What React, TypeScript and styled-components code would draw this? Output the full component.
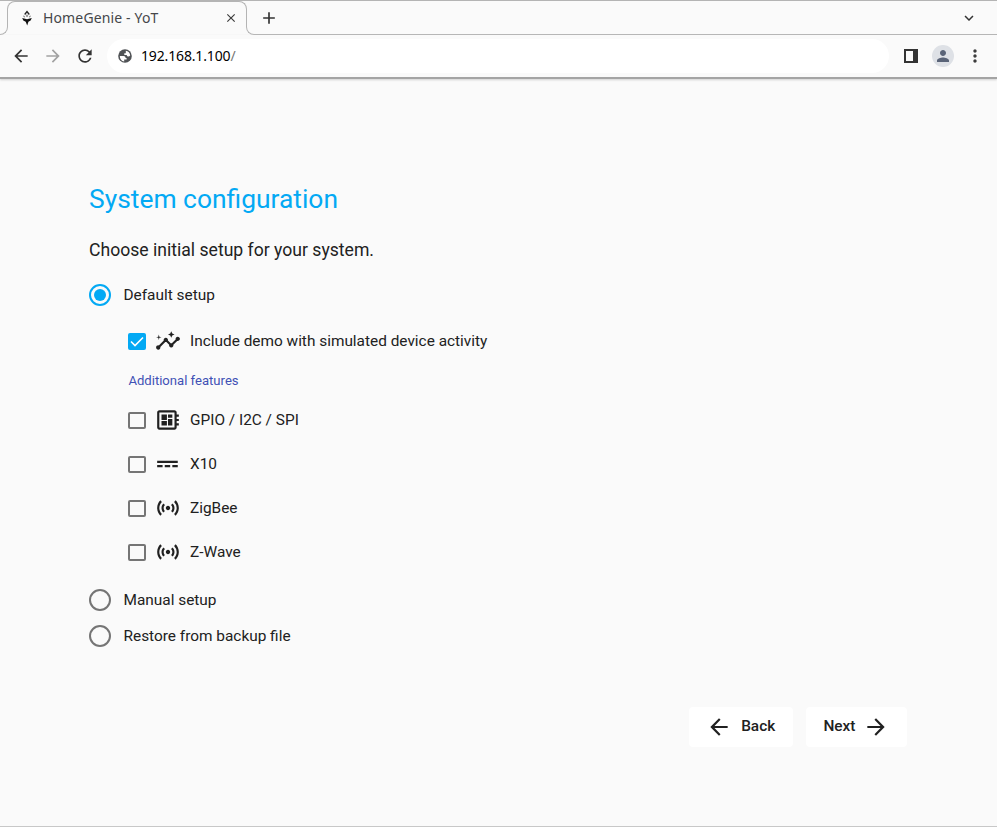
import React, { useState } from 'react';
import styled, { createGlobalStyle } from 'styled-components';
import {
  MdArrowBack,
  MdArrowForward,
  MdClose,
  MdAdd,
  MdDeveloperBoard,
  MdExpandMore,
  MdInsights,
  MdMoreVert,
  MdPerson,
  MdPowerInput,
  MdRefresh,
  MdSensors,
} from 'react-icons/md';
import type { IconType } from 'react-icons';

const GlobalStyle = createGlobalStyle`
  * { box-sizing: border-box; }
  body { margin: 0; background: #fafafa; color: #212121; font-family: Roboto, sans-serif; }
`;

const Window = styled.div`
  display: flex;
  flex-direction: column;
  height: 827px;
  overflow: hidden;
  border-bottom: 1px solid #c8c8c8;
`;

const TabStrip = styled.div`
  display: flex;
  height: 35px;
  border-top: 1px solid #b4b4b4;
`;

const Flare = styled.div<{ $side: 'left' | 'right' }>`
  align-self: flex-end;
  width: 8px;
  height: 8px;
  border-bottom: 1px solid #b4b4b4;
  ${({ $side }) =>
    $side === 'left'
      ? 'border-right: 1px solid #b4b4b4; border-bottom-right-radius: 8px; margin-right: -1px;'
      : 'border-left: 1px solid #b4b4b4; border-bottom-left-radius: 8px; margin-left: -1px;'}
`;

const Tab = styled.div`
  display: flex;
  align-items: center;
  width: 240px;
  height: 26px;
  padding: 7px 8px 0 11px;
  border: 1px solid #b4b4b4;
  border-bottom: none;
  border-radius: 8px 8px 0 0;
`;

const TabTitle = styled.span`
  flex: 1;
  margin-left: 8px;
  font: 14px/20px 'Noto Sans', sans-serif;
  letter-spacing: 0.14px;
  color: #45474a;
  white-space: nowrap;
`;

const StripRest = styled.div`
  display: flex;
  flex: 1;
  align-items: center;
  justify-content: space-between;
  padding: 1px 19px 0 5px;
  border-bottom: 1px solid #b4b4b4;
  color: #333333;
`;

const Toolbar = styled.div`
  display: flex;
  align-items: center;
  height: 44px;
  padding: 0 12px 1px 11px;
  border-bottom: 2px solid #a4a4a4;
  box-shadow: 0 1px 2px #d0d0d0;
  color: #3c3c3c;
`;

const NavButton = styled.button<{ $dim?: boolean }>`
  display: flex;
  width: 20px;
  height: 20px;
  margin-right: 12px;
  padding: 0;
  border: 0;
  background: none;
  color: ${({ $dim }) => ($dim ? '#a2a2a2' : '#333333')};
`;

const AddressBar = styled.div`
  display: flex;
  flex: 1;
  align-items: center;
  height: 34px;
  margin-right: 15px;
  padding-left: 10px;
  border-radius: 17px;
  background: #ffffff;
  color: #505356;
`;

const Address = styled.span`
  margin-left: 8px;
  font: 14px/20px 'Noto Sans', sans-serif;
  letter-spacing: -0.15px;
  color: #000000;

  i { font-style: normal; color: #777777; }
`;

const Tools = styled.div`
  display: flex;
  align-items: center;
  gap: 11px;

  > :first-child { margin-right: 3px; }
`;

const Avatar = styled.div`
  display: flex;
  align-items: center;
  justify-content: center;
  width: 22px;
  height: 22px;
  border-radius: 50%;
  background: #dee1e6;
  color: #5a6478;
`;

const Page = styled.main`
  display: flex;
  flex: 1;
  flex-direction: column;
  padding: 103px 90px 0 89px;
`;

const Title = styled.h1`
  margin: 0;
  font-size: 26.4px;
  line-height: 34px;
  font-weight: 400;
  color: #03a9f4;
`;

const Intro = styled.p`
  margin: 22px 0 15px;
  font-size: 17.6px;
  line-height: 24px;
`;

const RadioRow = styled.label`
  display: flex;
  align-items: center;
  height: 36px;
  font-size: 15.4px;
`;

const RadioMark = styled.span<{ $on: boolean }>`
  display: flex;
  align-items: center;
  justify-content: center;
  width: 22px;
  height: 22px;
  margin-right: 12.5px;
  border: 2px solid ${({ $on }) => ($on ? '#03a9f4' : '#757575')};
  border-radius: 50%;

  &::after {
    content: '';
    width: 12px;
    height: 12px;
    border-radius: 50%;
    background: ${({ $on }) => ($on ? '#03a9f4' : 'transparent')};
  }
`;

const Features = styled.div`
  display: flex;
  flex-direction: column;
  margin: 6px 0 8px 39px;
`;

const FeatureRow = styled.label`
  display: flex;
  align-items: center;
  height: 44px;
  font-size: 15.4px;

  > svg { margin: 0 9px 1px; }
`;

const CheckMark = styled.span<{ $on: boolean }>`
  display: flex;
  align-items: center;
  justify-content: center;
  width: 18px;
  height: 17px;
  margin-top: 1px;
  border: 2px solid ${({ $on }) => ($on ? '#03a9f4' : '#757575')};
  border-radius: 2px;
  background: ${({ $on }) => ($on ? '#03a9f4' : 'transparent')};
`;

const Subheading = styled.div`
  height: 35px;
  padding: 8px 0 0 0.4px;
  font-size: 13.1px;
  line-height: 20px;
  color: #3f51b5;
`;

const Actions = styled.div`
  display: flex;
  justify-content: flex-end;
  gap: 13px;
  margin-top: 53px;
`;

const ActionButton = styled.button<{ $width: number }>`
  display: flex;
  align-items: center;
  justify-content: space-between;
  width: ${({ $width }) => $width}px;
  height: 40px;
  padding: 0 17.8px 2px 17.4px;
  border: 0;
  border-radius: 4px;
  background: #ffffff;
  color: #212121;
  font: 500 15.4px/20px Roboto, sans-serif;

  > svg { margin-top: 2px; }
`;

const TabIcon = () => (
  <svg width="16" height="16" viewBox="0 0 16 16">
    <path d="M8 .5 10.8 4 9.8 5 8 2.8 6.2 5 5.2 4z" fill="#222" />
    <path d="M4.2 5.4 5.6 6 6 7.4 4.6 7zM11.8 5.4 10.4 6 10 7.4 11.4 7z" fill="#777" />
    <circle cx="8" cy="5.8" r="1.2" fill="#999" />
    <path d="M3.2 8 8 9.2 12.8 8 11.6 10.5 9.4 11.7 8.2 15.5 6.7 11.7 4.3 10.5z" fill="#111" />
  </svg>
);

const GlobeIcon = () => (
  <svg width="16" height="16" viewBox="0 0 16 16">
    <circle cx="8" cy="8" r="6.8" fill="#505356" />
    <path
      d="M2.8 8h3.6c1.5 0 2.2.8 2.2 2h1v1.5H7.2v1.9C4.6 13.2 2.7 11 2.8 8z"
      fill="#fff"
    />
    <path
      d="M8.8 2.8c2.4.3 4.3 2.3 4.4 4.8-.6.8-1.4 1-2.3.9-.8-.1-1.1-.6-1.1-1.4H7.3V5.3h1.5z"
      fill="#fff"
    />
  </svg>
);

const SidePanelIcon = () => (
  <svg width="14" height="14" viewBox="0 0 14 14">
    <path fillRule="evenodd" d="M0 0h14v14H0zM2 2v10h7V2z" fill="#333" />
  </svg>
);

const Tick = () => (
  <svg width="14" height="13" viewBox="0 0 14 13">
    <path d="M1 6.5 5 10.5 13 2.5" fill="none" stroke="#fff" strokeWidth="1.6" />
  </svg>
);

const features: { name: string; icon: IconType }[] = [
  { name: 'GPIO / I2C / SPI', icon: MdDeveloperBoard },
  { name: 'X10', icon: MdPowerInput },
  { name: 'ZigBee', icon: MdSensors },
  { name: 'Z-Wave', icon: MdSensors },
];

type FeatureProps = { name: string; icon: IconType; on: boolean; onToggle: () => void };

const Feature = ({ name, icon: Icon, on, onToggle }: FeatureProps) => (
  <FeatureRow onClick={onToggle}>
    <CheckMark $on={on}>{on && <Tick />}</CheckMark>
    <Icon size={26} />
    {name}
  </FeatureRow>
);

export default function App() {
  const [setup, setSetup] = useState('Default setup');
  const [chosen, setChosen] = useState<string[]>(['demo']);
  const toggle = (key: string) =>
    setChosen((c) => (c.includes(key) ? c.filter((k) => k !== key) : [...c, key]));

  const radio = (name: string) => (
    <RadioRow onClick={() => setSetup(name)}>
      <RadioMark $on={setup === name} />
      {name}
    </RadioRow>
  );

  return (
    <Window>
      <GlobalStyle />
      <TabStrip>
        <Flare $side="left" />
        <Tab>
          <TabIcon />
          <TabTitle>HomeGenie - YoT</TabTitle>
          <MdClose size={14} color="#3c3c3c" />
        </Tab>
        <Flare $side="right" />
        <StripRest>
          <MdAdd size={20} />
          <MdExpandMore size={18} />
        </StripRest>
      </TabStrip>
      <Toolbar>
        <NavButton><MdArrowBack size={20} /></NavButton>
        <NavButton $dim><MdArrowForward size={20} /></NavButton>
        <NavButton><MdRefresh size={20} /></NavButton>
        <AddressBar>
          <GlobeIcon />
          <Address>192.168.1.100<i>/</i></Address>
        </AddressBar>
        <Tools>
          <SidePanelIcon />
          <Avatar><MdPerson size={18} /></Avatar>
          <MdMoreVert size={20} />
        </Tools>
      </Toolbar>
      <Page>
        <Title>System configuration</Title>
        <Intro>Choose initial setup for your system.</Intro>
        {radio('Default setup')}
        <Features>
          <Feature
            name="Include demo with simulated device activity"
            icon={MdInsights}
            on={chosen.includes('demo')}
            onToggle={() => toggle('demo')}
          />
          <Subheading>Additional features</Subheading>
          {features.map((f) => (
            <Feature key={f.name} {...f} on={chosen.includes(f.name)} onToggle={() => toggle(f.name)} />
          ))}
        </Features>
        {radio('Manual setup')}
        {radio('Restore from backup file')}
        <Actions>
          <ActionButton $width={104}><MdArrowBack size={26} />Back</ActionButton>
          <ActionButton $width={101}>Next<MdArrowForward size={26} /></ActionButton>
        </Actions>
      </Page>
    </Window>
  );
}
